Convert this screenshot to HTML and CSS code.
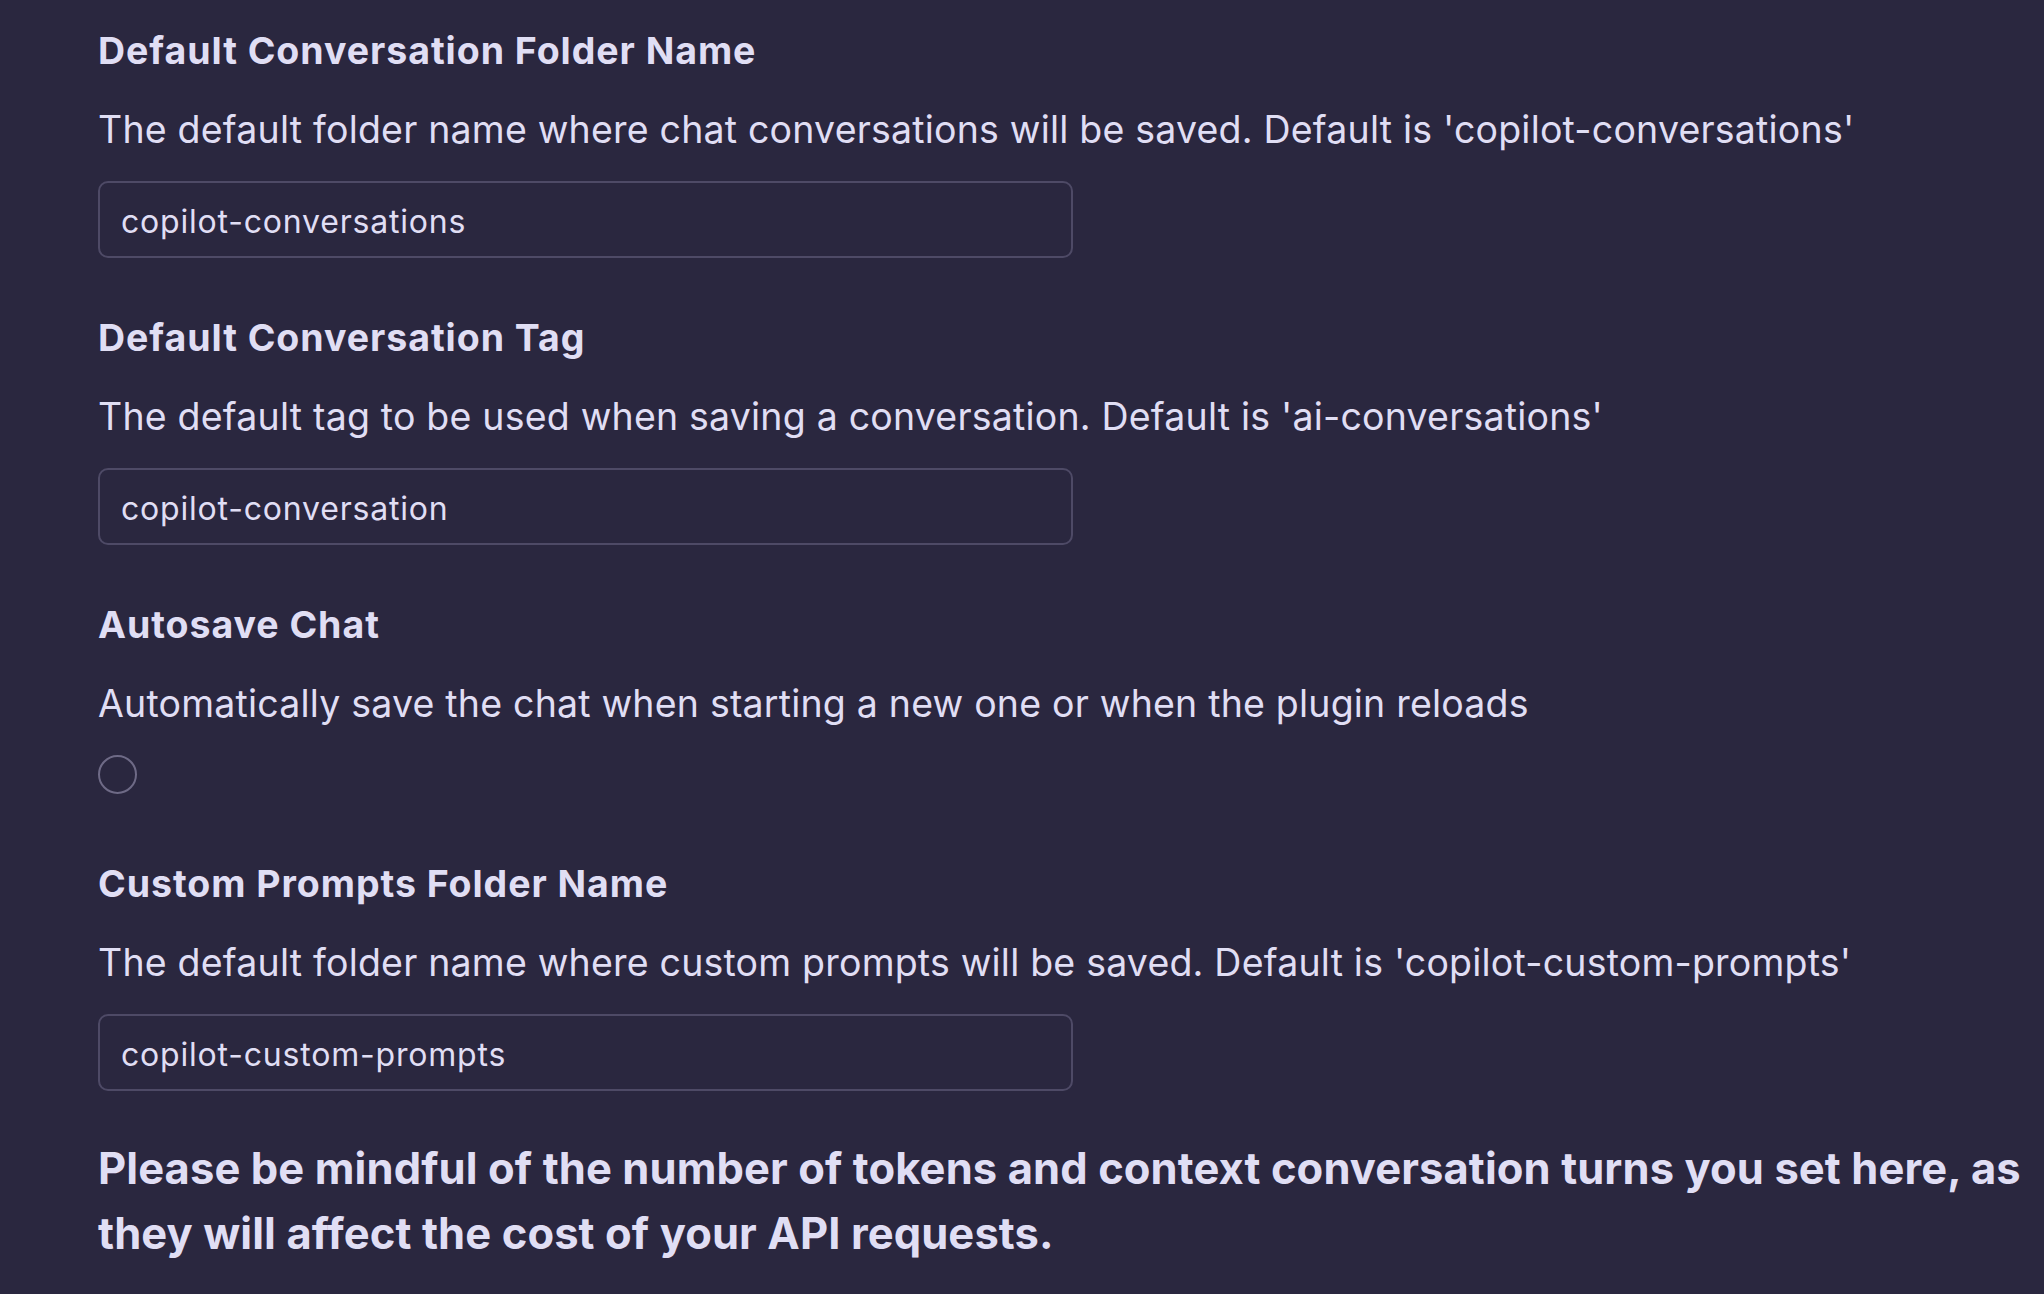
FILE: index.html
```html
<!DOCTYPE html>
<html lang="en">
<head>
<meta charset="utf-8">
<title>Copilot Settings</title>
<link rel="stylesheet" href="styles.css">
</head>
<body>
<div class="settings">
  <div class="setting-item">
    <div class="setting-name">Default Conversation Folder Name</div>
    <div class="setting-desc">The default folder name where chat conversations will be saved. Default is 'copilot-conversations'</div>
    <input class="text-input" type="text" value="copilot-conversations">
  </div>
  <div class="setting-item">
    <div class="setting-name">Default Conversation Tag</div>
    <div class="setting-desc">The default tag to be used when saving a conversation. Default is 'ai-conversations'</div>
    <input class="text-input" type="text" value="copilot-conversation">
  </div>
  <div class="setting-item setting-item-toggle">
    <div class="setting-name">Autosave Chat</div>
    <div class="setting-desc">Automatically save the chat when starting a new one or when the plugin reloads</div>
    <div class="checkbox" role="checkbox" aria-checked="false"></div>
  </div>
  <div class="setting-item">
    <div class="setting-name">Custom Prompts Folder Name</div>
    <div class="setting-desc">The default folder name where custom prompts will be saved. Default is 'copilot-custom-prompts'</div>
    <input class="text-input" type="text" value="copilot-custom-prompts">
  </div>
  <h4 class="notice">Please be mindful of the number of tokens and context conversation turns you set here, as they will affect the cost of your API requests.</h4>
</div>
</body>
</html>
```
FILE: styles.css
```css
html, body {
  margin: 0;
  padding: 0;
  background: #2a273f;
}

body {
  color: #e0def4;
  font-family: Inter, "Noto Sans", "Liberation Sans", sans-serif;
  overflow: hidden;
}

.settings {
  padding: 28px 12px 0 98px;
  width: 2044px;
  box-sizing: border-box;
}

.setting-item {
  display: flex;
  flex-direction: column;
  align-items: flex-start;
  margin-bottom: 57px;
}

.setting-item-toggle {
  margin-bottom: 67px;
}

.setting-name {
  font-size: 37.5px;
  line-height: 45px;
  font-weight: 700;
  letter-spacing: 0.95px;
  margin-bottom: 34px;
}

.setting-desc {
  font-size: 37.5px;
  line-height: 45px;
  font-weight: 400;
  letter-spacing: 0.2px;
  margin-bottom: 29px;
}

.text-input {
  box-sizing: border-box;
  width: 975px;
  height: 77px;
  margin: 0;
  padding: 3px 21px 0 21px;
  border: 2px solid #4e4a66;
  border-radius: 10px;
  background: transparent;
  color: #e0def4;
  font-family: Inter, "Noto Sans", "Liberation Sans", sans-serif;
  font-size: 32px;
  letter-spacing: 0.8px;
  outline: none;
}

.checkbox {
  box-sizing: border-box;
  width: 39px;
  height: 39px;
  border: 2px solid #6e6a86;
  border-radius: 50%;
}

.notice {
  margin: -12px 0 0 0;
  font-size: 43.5px;
  line-height: 65px;
  font-weight: 700;
  letter-spacing: 0.1px;
}
```
